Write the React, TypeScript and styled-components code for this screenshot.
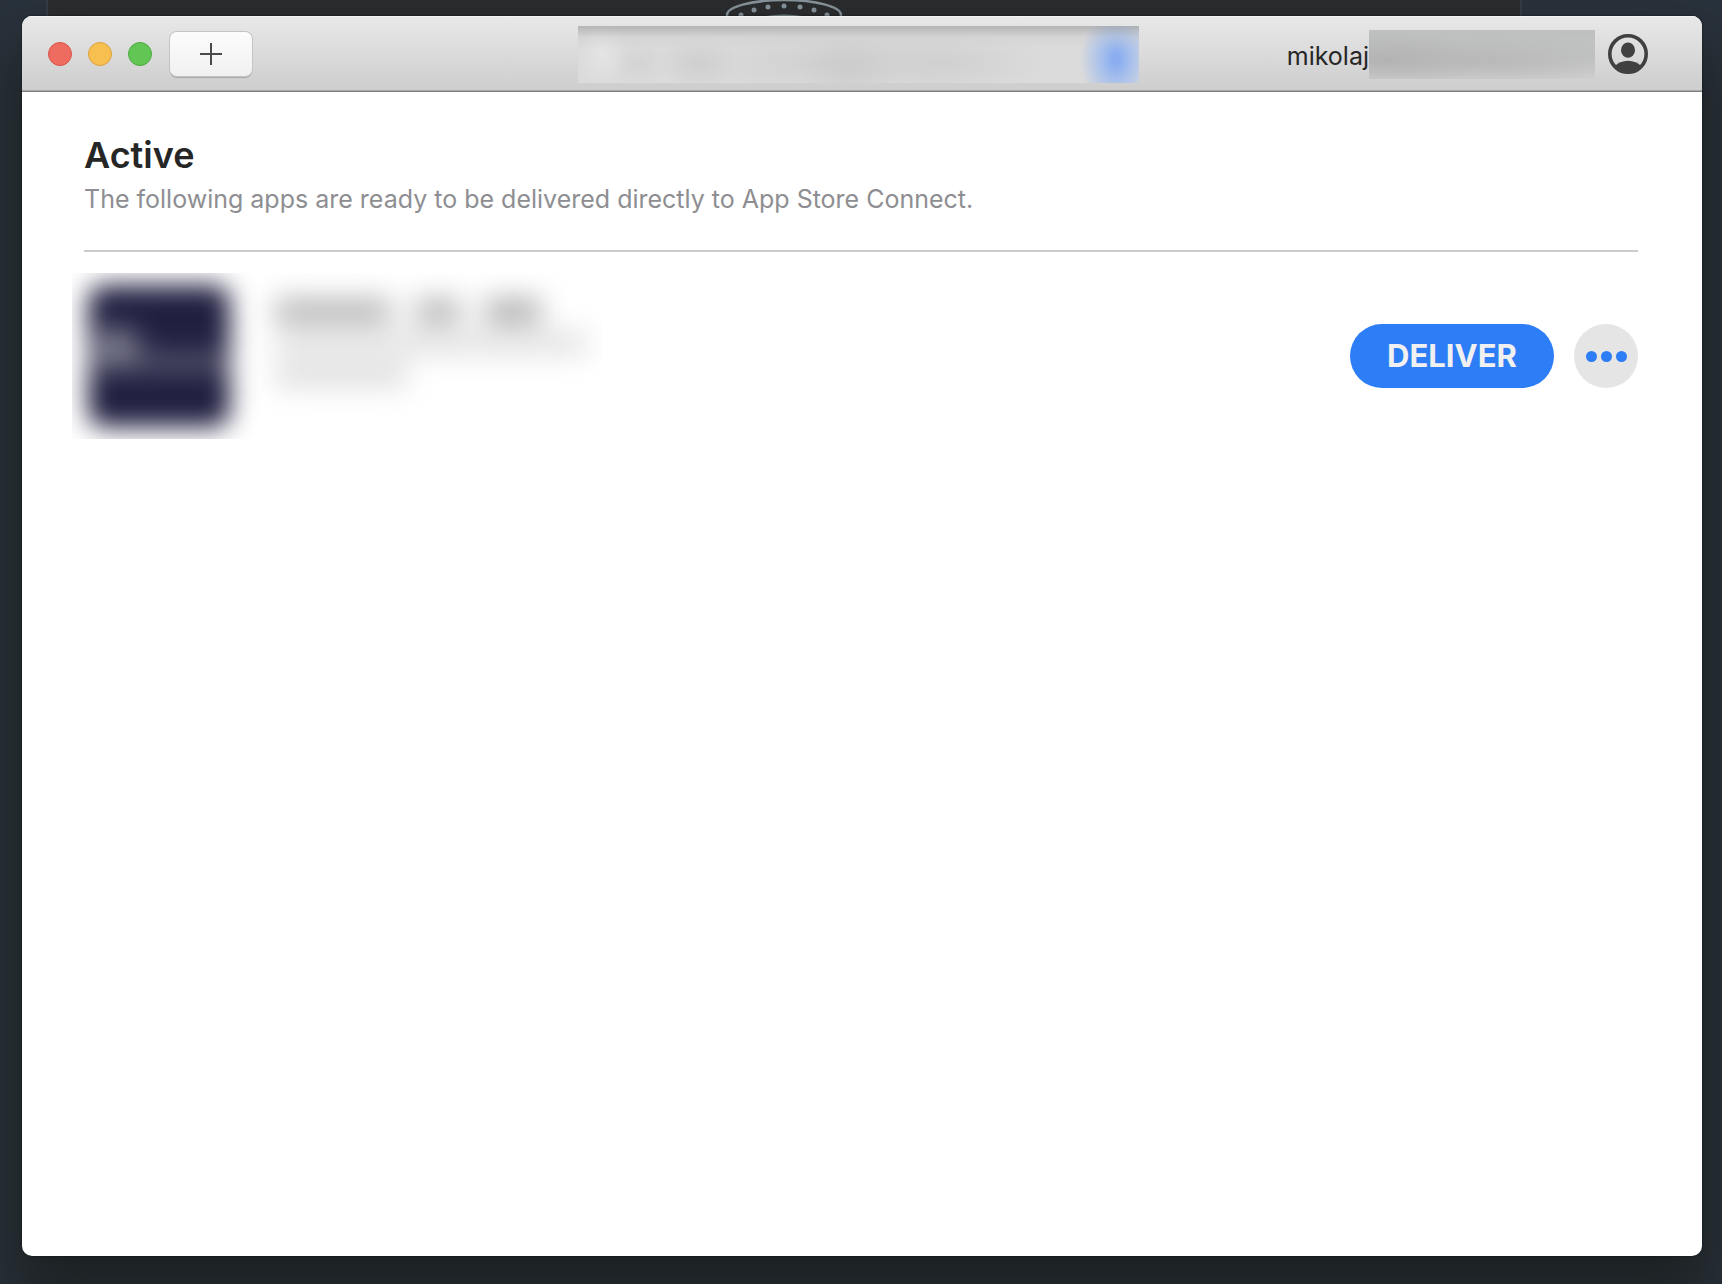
import React from "react";
import styled, { createGlobalStyle } from "styled-components";

const GlobalStyle = createGlobalStyle`
  *, *::before, *::after { box-sizing: border-box; }
  body {
    margin: 0;
    background: #29323b;
    font-family: Inter, "Liberation Sans", sans-serif;
    color: #262626;
  }
  h1, p, ul { margin: 0; padding: 0; }
  button { border: 0; padding: 0; font: inherit; cursor: pointer; }
`;

const Desktop = styled.div`
  position: relative;
  display: flex;
  min-height: 100vh;
  padding: 16px 20px 28px 22px;
  overflow: hidden;
`;

const BackPanel = styled.div`
  position: absolute;
  inset: 0 200px auto 46px;
  height: 60%;
  display: flex;
  justify-content: center;
  background: #2b2c2e;
  border: solid #343d45;
  border-width: 0 2px;
`;

const Emblem = styled.svg`
  width: 120px;
  height: 48px;
`;

const Window = styled.section`
  position: relative;
  flex: 1;
  display: flex;
  flex-direction: column;
  border-radius: 10px;
  overflow: hidden;
  background: #fff;
  box-shadow: 0 0 2px rgba(0, 0, 0, 0.7), 0 40px 60px 8px rgba(27, 33, 34, 0.95);
`;

const Toolbar = styled.header`
  display: grid;
  grid-template-columns: 1fr 561px 1fr;
  align-items: center;
  height: 76px;
  padding: 0 34px 0 26px;
  background: linear-gradient(#e8e8e8, #cdcdcd);
  box-shadow: inset 0 1px #f6f6f6, inset 0 -1px #7e7e7e, inset 0 -2px #a9a9a9;
`;

const Controls = styled.div`
  display: flex;
  align-items: center;
  gap: 16px;
`;

const Light = styled.button<{ $fill: string; $edge: string }>`
  width: 24px;
  height: 24px;
  border-radius: 50%;
  background: ${(p) => p.$fill};
  border: 1px solid ${(p) => p.$edge};
`;

const AddButton = styled.button`
  display: grid;
  place-items: center;
  width: 82px;
  height: 44px;
  margin-left: 2px;
  border-radius: 7px;
  background: linear-gradient(#fcfcfc, #f1f1f1);
  box-shadow: 0 0 0 1px #c4c4c4, 0 2px 1px #a6a6a6;
`;

const StatusField = styled.div`
  height: 57px;
  background:
    linear-gradient(rgba(150, 150, 150, 0.55), rgba(190, 190, 190, 0.2) 20%, transparent 40%),
    radial-gradient(ellipse 36px 50px at 538px 58%, #8baef0 10%, rgba(150, 183, 242, 0.7) 45%, transparent),
    radial-gradient(ellipse 24px 32px at 24px 50%, #e4e4e4, transparent),
    radial-gradient(ellipse 30px 24px at 62px 65%, #d4d4d4, transparent),
    radial-gradient(ellipse 40px 28px at 120px 65%, #cfcfcf, transparent),
    radial-gradient(ellipse 50px 30px at 270px 70%, #cccccc, transparent),
    radial-gradient(ellipse 150px 34px at 250px 65%, #d1d1d1, transparent),
    radial-gradient(ellipse 110px 32px at 360px 65%, #d0d0d0, transparent),
    #dbdbdb;
`;

const Account = styled.div`
  display: flex;
  align-items: center;
  justify-content: flex-end;
  margin-right: 20px;
  font-size: 25px;
  line-height: 32px;
`;

const UserName = styled.span`
  padding-top: 4px;
`;

const Domain = styled.span`
  width: 226px;
  height: 49px;
  margin-right: 13px;
  background:
    radial-gradient(ellipse 100px 28px at 16px 60%, #b3b3b3, transparent),
    radial-gradient(ellipse 140px 26px at 120px 62%, #b9b9b9, transparent),
    linear-gradient(#bebfbf, #c3c4c4 60%, #cfcfcf);
`;

const AvatarButton = styled.button`
  width: 40px;
  height: 40px;
  background: none;
  svg { display: block; }
`;

const Content = styled.main`
  flex: 1;
  padding: 41px 64px 64px 62px;
`;

const Heading = styled.h1`
  font-size: 36px;
  line-height: 44px;
  font-weight: 600;
`;

const Subtitle = styled.p`
  padding: 6px 0 35px;
  border-bottom: 2px solid #ccc;
  color: #8e8e92;
  font-size: 25px;
  line-height: 32px;
  font-weight: 400;
`;

const AppList = styled.ul`
  list-style: none;
  padding-top: 21px;
`;

const AppRow = styled.li`
  display: flex;
  align-items: center;
  gap: 20px;
`;

const AppSummary = styled.div`
  display: flex;
  gap: 45px;
  width: 530px;
  height: 166px;
  margin: 0 auto 0 -12px;
  padding: 12px 16px;
  overflow: hidden;
`;

const AppIcon = styled.div`
  flex: none;
  width: 142px;
  height: 142px;
  border-radius: 16px;
  filter: blur(13px);
  background:
    radial-gradient(ellipse 34px 26px at 28px 60px, #8c8c9c 20%, transparent),
    linear-gradient(transparent 44%, #58586f 52%, #58586f 58%, transparent 64%),
    #201f40;
`;

const AppText = styled.div`
  display: flex;
  flex-direction: column;
  gap: 8px;
  padding-top: 14px;
  filter: blur(14px);
`;

const Words = styled.div`
  display: flex;
  gap: 24px;
`;

const Word = styled.span<{ $width: number; $tone: string }>`
  width: ${(p) => p.$width}px;
  height: 24px;
  background: ${(p) => p.$tone};
`;

const DeliverButton = styled.button`
  width: 204px;
  height: 64px;
  border-radius: 32px;
  background: #2d7df6;
  color: #f0f0f0;
  font-size: 31px;
  line-height: 40px;
  font-weight: 700;
`;

const MoreButton = styled.button`
  display: flex;
  align-items: center;
  justify-content: center;
  gap: 4px;
  width: 64px;
  height: 64px;
  border-radius: 50%;
  background: #e5e5e5;
`;

const Dot = styled.span`
  width: 11px;
  height: 11px;
  border-radius: 50%;
  background: #2d7df6;
`;

const dots = [[-43, 15], [-30, 10], [-16, 7], [0, 6], [16, 7], [30, 10], [43, 15]];

export default function App() {
  return (
    <Desktop>
      <GlobalStyle />
      <BackPanel aria-hidden="true">
        <Emblem viewBox="-60 0 120 48">
          <ellipse cx="0" cy="15" rx="57" ry="15" fill="none" stroke="#8a979f" strokeWidth="2.5" />
          {dots.map(([x, y]) => (
            <circle key={x} cx={x} cy={y} r="2.5" fill="#8a979f" />
          ))}
          <ellipse cx="0" cy="20" rx="25" ry="5.5" fill="#8a979f" />
        </Emblem>
      </BackPanel>
      <Window>
        <Toolbar>
          <Controls>
            <Light aria-label="Close" $fill="#ed6b5f" $edge="#d9544a" />
            <Light aria-label="Minimize" $fill="#f6bf50" $edge="#dca23c" />
            <Light aria-label="Zoom" $fill="#62c655" $edge="#4fa83f" />
            <AddButton aria-label="Add">
              <svg width="22" height="22" viewBox="0 0 22 22" stroke="#4a4a4a" strokeWidth="2">
                <path d="M11 0v22M0 11h22" />
              </svg>
            </AddButton>
          </Controls>
          <StatusField />
          <Account>
            <UserName>mikolaj</UserName>
            <Domain />
            <AvatarButton aria-label="Account">
              <svg width="40" height="40" viewBox="0 0 40 40" fill="#404040">
                <circle cx="20" cy="20" r="18.2" fill="none" stroke="#404040" strokeWidth="3.6" />
                <ellipse cx="20" cy="16.2" rx="7" ry="7.6" />
                <path d="M7 32C10 29 14.500 26.800 20 26.800S30 29 33 32A18.200 18.200 0 0 1 7 32Z" />
              </svg>
            </AvatarButton>
          </Account>
        </Toolbar>
        <Content>
          <Heading>Active</Heading>
          <Subtitle>The following apps are ready to be delivered directly to App Store Connect.</Subtitle>
          <AppList>
            <AppRow>
              <AppSummary>
                <AppIcon />
                <AppText>
                  <Words>
                    <Word $width={116} $tone="#b4b4b4" />
                    <Word $width={46} $tone="#b4b4b4" />
                    <Word $width={56} $tone="#acacac" />
                  </Words>
                  <Word $width={312} $tone="#e2e2e2" />
                  <Word $width={132} $tone="#dedede" />
                </AppText>
              </AppSummary>
              <DeliverButton>DELIVER</DeliverButton>
              <MoreButton aria-label="More actions">
                <Dot />
                <Dot />
                <Dot />
              </MoreButton>
            </AppRow>
          </AppList>
        </Content>
      </Window>
    </Desktop>
  );
}
